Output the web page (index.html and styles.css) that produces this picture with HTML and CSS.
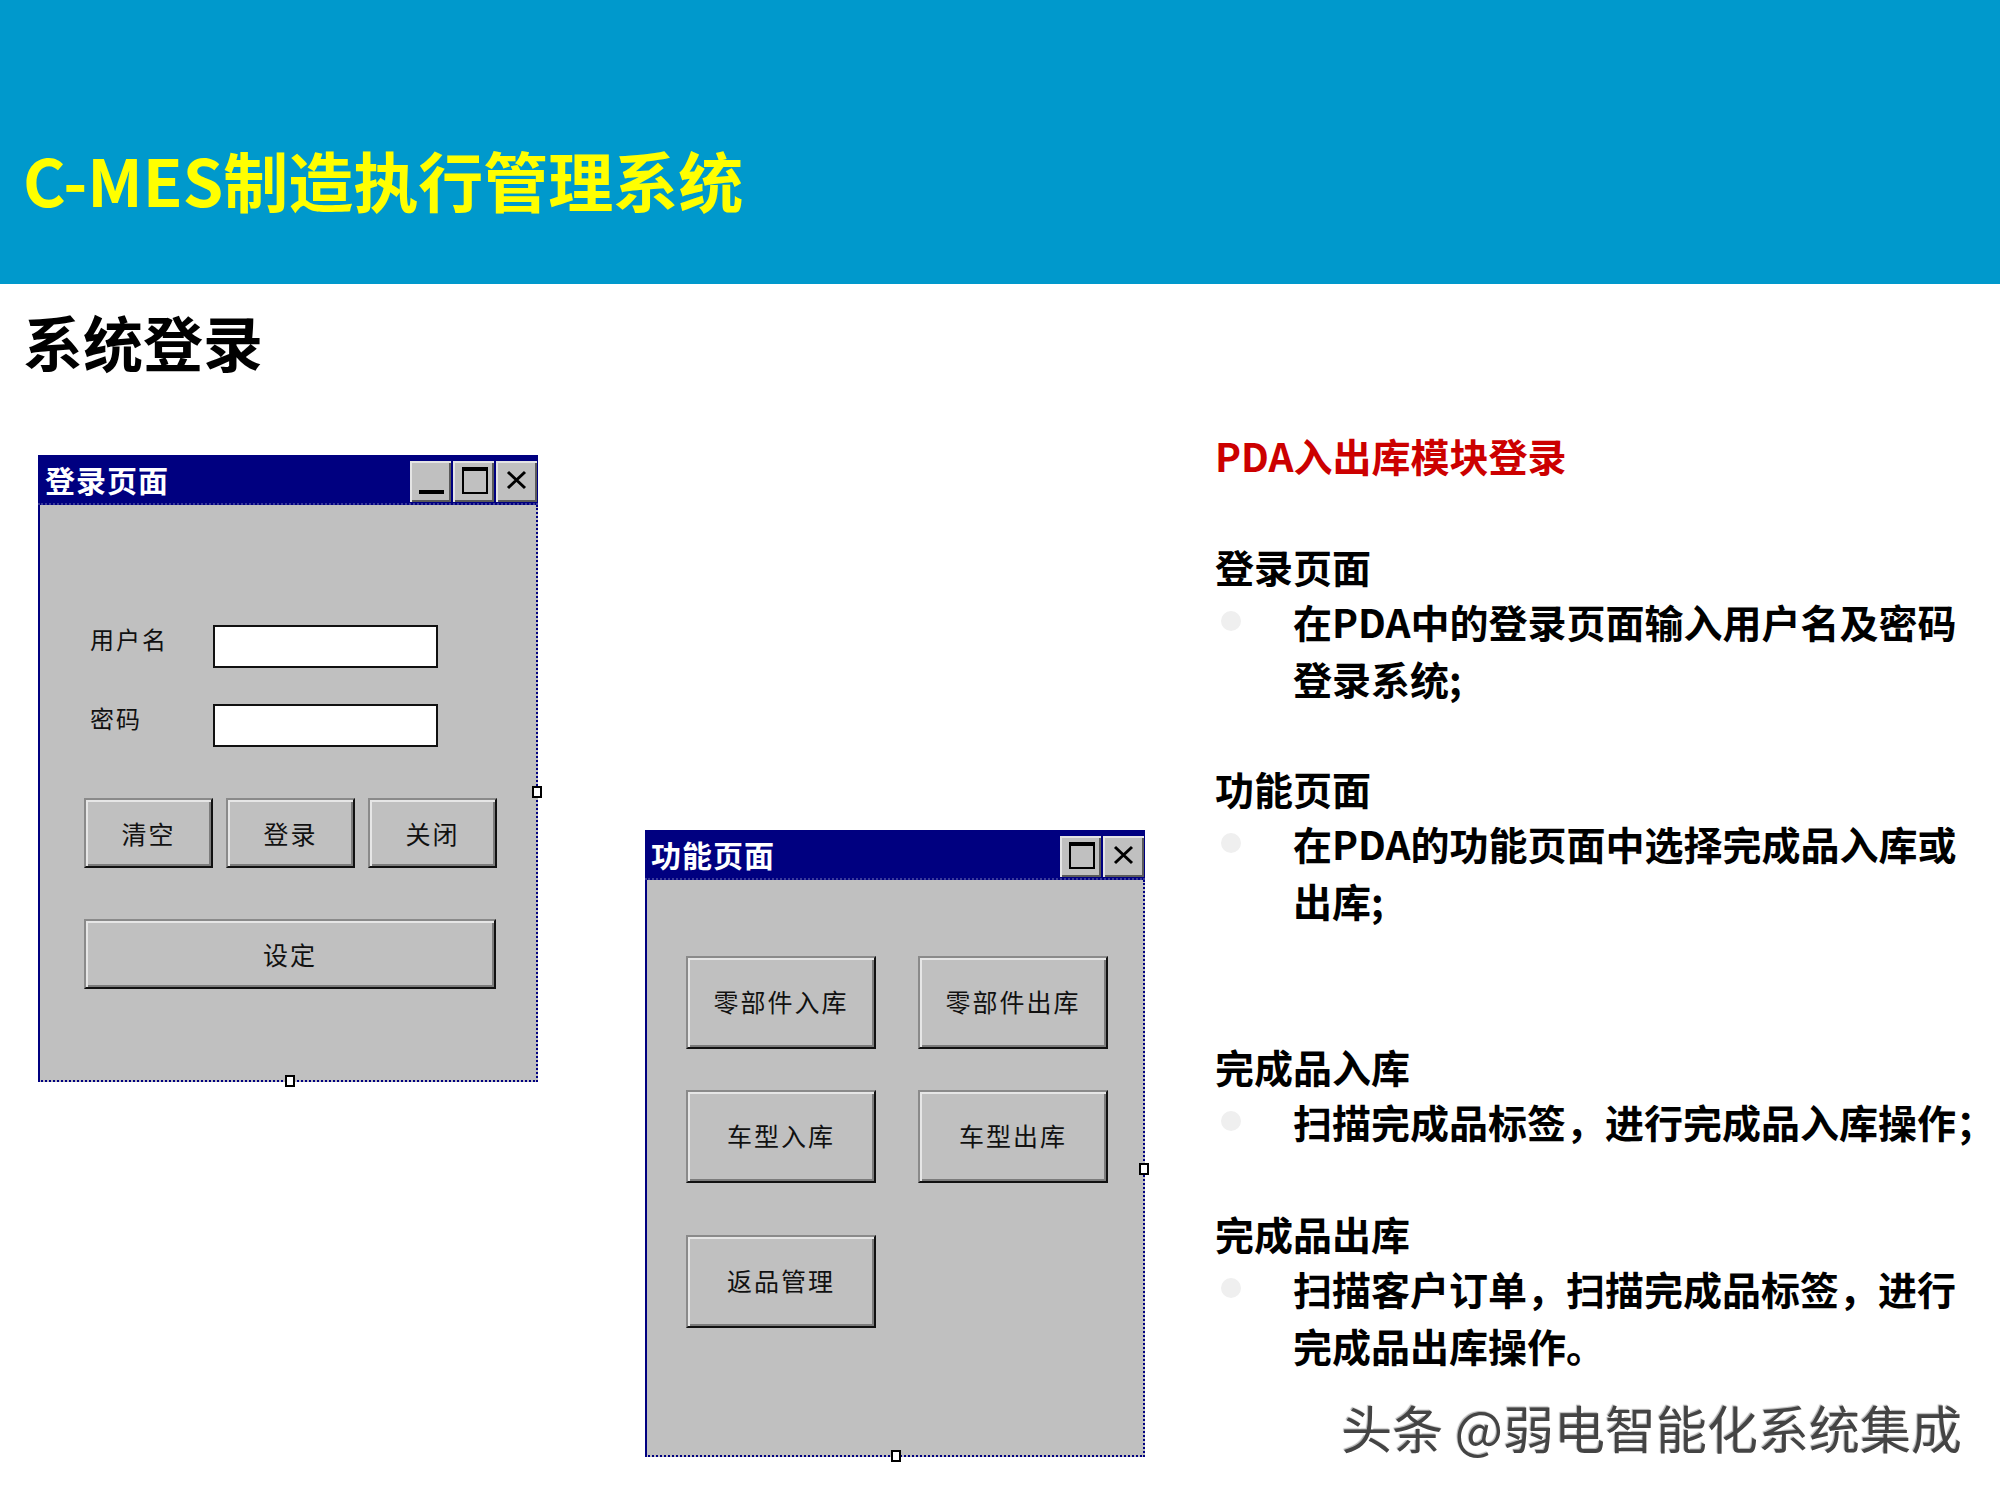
FILE: index.html
```html
<!DOCTYPE html>
<html lang="zh-CN">
<head>
    <meta charset="utf-8">
    <title>C-MES制造执行管理系统 - 系统登录</title>
    <link rel="stylesheet" href="styles.css">
</head>
<body>
    <header class="banner">
        <h1 class="banner-title">C-MES制造执行管理系统</h1>
    </header>

    <h2 class="page-title">系统登录</h2>

    <main class="stage">
        <!-- PDA login window -->
        <div class="window login-window">
            <div class="titlebar">
                <span class="titlebar-text">登录页面</span>
                <div class="titlebar-buttons">
                    <span class="cap-btn">
                        <svg viewBox="0 0 41 41" width="41" height="41"><rect x="9" y="29" width="25" height="4" fill="#000"/></svg>
                    </span>
                    <span class="cap-btn">
                        <svg viewBox="0 0 41 41" width="41" height="41"><rect x="10" y="7" width="24" height="25" fill="none" stroke="#000" stroke-width="2"/><rect x="9" y="6" width="26" height="4" fill="#000"/></svg>
                    </span>
                    <span class="cap-btn">
                        <svg viewBox="0 0 41 41" width="41" height="41"><path d="M12 11 L29 27 M29 11 L12 27" stroke="#000" stroke-width="3" fill="none"/></svg>
                    </span>
                </div>
            </div>
            <div class="window-body login-body">
                <div class="field-row">
                    <label class="field-label">用户名</label>
                    <div class="textbox"></div>
                </div>
                <div class="field-row second">
                    <label class="field-label">密码</label>
                    <div class="textbox"></div>
                </div>
                <div class="button-row">
                    <div class="win-btn">清空</div>
                    <div class="win-btn">登录</div>
                    <div class="win-btn">关闭</div>
                </div>
                <div class="win-btn wide">设定</div>
                <span class="handle handle-right"></span>
                <span class="handle handle-bottom"></span>
            </div>
        </div>

        <!-- PDA function window -->
        <div class="window func-window">
            <div class="titlebar">
                <span class="titlebar-text">功能页面</span>
                <div class="titlebar-buttons">
                    <span class="cap-btn">
                        <svg viewBox="0 0 41 41" width="41" height="41"><rect x="10" y="7" width="24" height="25" fill="none" stroke="#000" stroke-width="2"/><rect x="9" y="6" width="26" height="4" fill="#000"/></svg>
                    </span>
                    <span class="cap-btn">
                        <svg viewBox="0 0 41 41" width="41" height="41"><path d="M12 11 L29 27 M29 11 L12 27" stroke="#000" stroke-width="3" fill="none"/></svg>
                    </span>
                </div>
            </div>
            <div class="window-body func-body">
                <div class="func-grid">
                    <div class="win-btn tall">零部件入库</div>
                    <div class="win-btn tall">零部件出库</div>
                    <div class="win-btn tall">车型入库</div>
                    <div class="win-btn tall">车型出库</div>
                    <div class="win-btn tall last">返品管理</div>
                </div>
                <span class="handle handle-right"></span>
                <span class="handle handle-bottom"></span>
            </div>
        </div>

        <!-- Description -->
        <section class="notes">
            <div class="note-title">PDA入出库模块登录</div>

            <div class="note-heading first">登录页面</div>
            <div class="note-item">
                <span class="dot"></span>
                <p>在PDA中的登录页面输入用户名及密码<br>登录系统;</p>
            </div>

            <div class="note-heading second">功能页面</div>
            <div class="note-item">
                <span class="dot"></span>
                <p>在PDA的功能页面中选择完成品入库或<br>出库;</p>
            </div>

            <div class="note-heading third">完成品入库</div>
            <div class="note-item">
                <span class="dot"></span>
                <p>扫描完成品标签，进行完成品入库操作；</p>
            </div>

            <div class="note-heading fourth">完成品出库</div>
            <div class="note-item">
                <span class="dot"></span>
                <p>扫描客户订单，扫描完成品标签，进行<br>完成品出库操作。</p>
            </div>
        </section>
    </main>

    <div class="watermark">头条 @弱电智能化系统集成</div>
</body>
</html>
```

FILE: styles.css
```css
/* General styling */
* {
    box-sizing: border-box;
}

body {
    margin: 0;
    padding: 0;
    width: 2000px;
    height: 1500px;
    position: relative;
    overflow: hidden;
    background-color: #ffffff;
    font-family: "Noto Sans CJK SC", "Noto Sans", sans-serif;
    color: #000;
}

/* Top banner */
.banner {
    height: 284px;
    background-color: #0099cc;
    padding: 147px 0 0 23px;
}

.banner-title {
    margin: 0;
    font-size: 65px;
    line-height: 65px;
    font-weight: 700;
    color: #ffff00;
    white-space: nowrap;
}

.page-title {
    margin: 0;
    padding: 27px 0 0 23px;
    font-size: 60px;
    line-height: 60px;
    font-weight: 700;
    color: #000;
}

/* Layout of the slide body */
.stage {
    display: flex;
    align-items: flex-start;
    padding-left: 38px;
}

/* Classic windows */
.window {
    display: flex;
    flex-direction: column;
}

.login-window {
    width: 500px;
    height: 627px;
    margin-top: 84px;
}

.func-window {
    width: 500px;
    height: 627px;
    margin-top: 459px;
    margin-left: 107px;
}

.titlebar {
    height: 50px;
    flex-shrink: 0;
    background-color: #000080;
    display: flex;
    align-items: center;
    justify-content: space-between;
    padding: 0 1px 0 7px;
    border-bottom: 2px dotted #3a3a9a;
}

.func-window .titlebar {
    padding-left: 6px;
}

.titlebar-text {
    color: #fff;
    font-size: 30px;
    line-height: 30px;
    font-weight: 700;
    letter-spacing: 1px;
}

.titlebar-buttons {
    display: flex;
    gap: 2px;
    align-self: flex-start;
    margin-top: 6px;
}

.cap-btn {
    width: 41px;
    height: 41px;
    background-color: #c0c0c0;
    box-shadow: inset 2px 2px #e4e4e4, inset -2px -2px #5a5a5a;
    display: block;
}

.cap-btn svg {
    display: block;
}

.window-body {
    flex: 1;
    position: relative;
    background-color: #c0c0c0;
    border-left: 2px solid #000080;
    border-right: 2px dotted #000080;
    border-bottom: 2px dotted #000080;
}

/* Login page contents */
.login-body {
    padding: 120px 0 0 44px;
}

.field-row {
    display: flex;
    align-items: flex-start;
    padding-left: 6px;
}

.field-row.second {
    margin-top: 36px;
}

.field-label {
    width: 123px;
    font-size: 24px;
    line-height: 28px;
    letter-spacing: 2px;
    color: #111;
}

.textbox {
    width: 225px;
    height: 43px;
    background-color: #fff;
    border: 2px solid #111;
}

.button-row {
    display: flex;
    gap: 13px;
    margin-top: 51px;
}

.win-btn {
    width: 129px;
    height: 70px;
    background-color: #c0c0c0;
    border: 2px solid;
    border-color: #8a8a8a #111 #111 #8a8a8a;
    box-shadow: inset 2px 2px #e6e6e6, inset -2px -2px #7c7c7c;
    display: flex;
    align-items: center;
    justify-content: center;
    font-size: 25px;
    letter-spacing: 2px;
    color: #111;
}

.win-btn.wide {
    width: 412px;
    margin-top: 51px;
}

/* Function page contents */
.func-body {
    padding: 76px 0 0 39px;
}

.func-grid {
    display: grid;
    grid-template-columns: 190px 190px;
    grid-auto-rows: 93px;
    column-gap: 42px;
    row-gap: 41px;
}

.win-btn.tall {
    width: 190px;
    height: 93px;
    padding-bottom: 4px;
}

.win-btn.last {
    margin-top: 11px;
}

/* Selection handles on the designer frame */
.handle {
    position: absolute;
    width: 10px;
    height: 12px;
    background-color: #fff;
    border: 2px solid #000;
}

.login-body .handle-right {
    right: -6px;
    top: 281px;
}

.login-body .handle-bottom {
    left: 245px;
    bottom: -7px;
}

.func-body .handle-right {
    right: -6px;
    top: 283px;
}

.func-body .handle-bottom {
    left: 244px;
    bottom: -7px;
}

/* Description text */
.notes {
    margin-left: 70px;
    padding-top: 56px;
    font-size: 39px;
    line-height: 57px;
    font-weight: 700;
    white-space: nowrap;
}

.note-title {
    color: #cc0000;
}

.note-heading.first {
    margin-top: 54px;
}

.note-heading.second {
    margin-top: 53px;
}

.note-heading.third {
    margin-top: 109px;
}

.note-heading.fourth {
    margin-top: 55px;
}

.note-item {
    display: flex;
    align-items: flex-start;
    margin-top: -2px;
}

.note-item p {
    margin: 0;
}

.dot {
    width: 20px;
    height: 20px;
    border-radius: 50%;
    background-color: #efefef;
    flex-shrink: 0;
    margin: 18px 52px 0 6px;
}

/* Watermark over the slide */
.watermark {
    position: absolute;
    right: 38px;
    top: 1402px;
    font-size: 51px;
    line-height: 51px;
    color: #444444;
    text-shadow: 2px 2px 1px #ffffff, -1px -1px 1px #b0b0b0;
    white-space: nowrap;
}
```
